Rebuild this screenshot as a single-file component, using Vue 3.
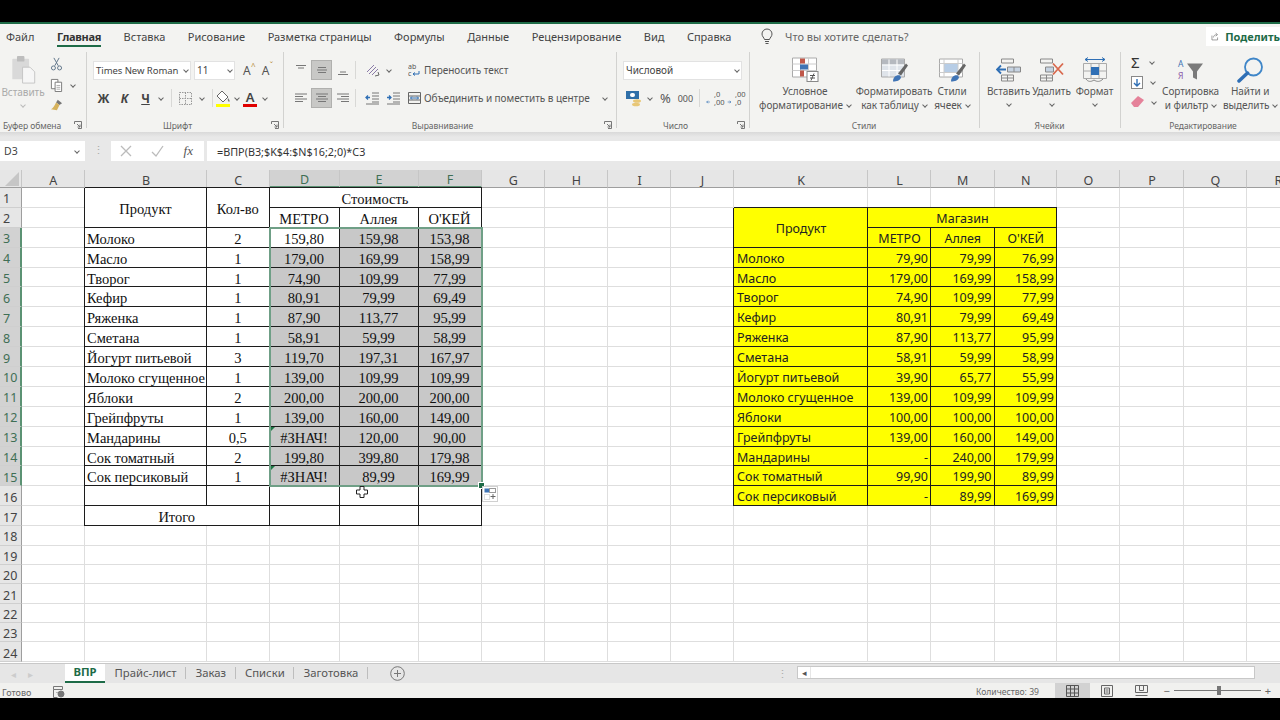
<template>
  <div class="app">
    <div class="accent"></div>

    <div class="menu-row">
      <div class="menu">
        <span v-for="t in menuTabs" :key="t" class="menu-tab" :class="{ active: t === 'Главная' }">{{ t }}</span>
      </div>
      <svg class="bulb" width="14" height="17" viewBox="0 0 14 17" fill="none" stroke="#555" stroke-width="1">
        <path d="M4.5 11.5C4 9.5 2 8.500 2 6a5 5 0 0 1 10 0c0 2.500-2 3.500-2.500 5.500z" />
        <path d="M5 13.500h4M5.500 15.500h3" />
      </svg>
      <span class="tell">Что вы хотите сделать?</span>
      <div class="share">
        <svg width="13" height="13" viewBox="0 0 13 13" fill="none" stroke="#666" stroke-width="1">
          <path d="M1.500 5v7h9V8M4 8c0-3 2.500-4.500 5-4.500M7.500 1l3 2.500-3 2.500" />
        </svg>
        <b>Поделить</b>
      </div>
    </div>

    <div class="ribbon">
      <section class="group g-clip">
        <div class="body clip-body">
          <div class="paste">
            <svg width="25" height="28" viewBox="0 0 26 30">
              <rect x="1" y="3" width="18" height="22" rx="1" fill="#d9d9d9" />
              <rect x="6" y="0" width="8" height="6" rx="1" fill="#bdbdbd" />
              <path d="M12 12h8l5 5v12H12z" fill="#f6f6f6" stroke="#c4c4c4" />
            </svg>
            <span class="dim">Вставить</span>
            <i class="caret dim-caret"></i>
          </div>
          <div class="clip-tools">
            <svg width="13" height="14" viewBox="0 0 14 16" fill="none" stroke="#5f7488" stroke-width="1.100">
              <path d="M4 1l5 9M10 1L5 10" />
              <circle cx="3.500" cy="12.500" r="2.300" />
              <circle cx="10.500" cy="12.500" r="2.300" />
            </svg>
            <div class="tool-line">
              <svg width="13" height="14" viewBox="0 0 14 15" fill="#fff" stroke="#777">
                <path d="M1.500 1.500h7v10h-7z" />
                <path d="M5.500 4.500h7v10h-7z" />
                <path d="M7 8h4M7 10h4M7 12h4" stroke="#aaa" />
              </svg>
              <i class="caret"></i>
            </div>
            <svg width="13" height="12" viewBox="0 0 15 14">
              <path d="M9 1l5 4-3 2-4-3z" fill="#777" />
              <path d="M7 4l4 3-3 6-7-1c2-1 4-4 6-8z" fill="#d6b25c" />
            </svg>
          </div>
        </div>
        <div class="label">
          <span>Буфер обмена</span>
          <svg class="launch" width="8" height="8" viewBox="0 0 8 8" fill="none" stroke="#777"><path d="M.5 3V.5h7v7H4M3 3l3 3M6 3.500V6H3.500" /></svg>
        </div>
      </section>

      <section class="group g-font">
        <div class="body stack">
          <div class="row">
            <div class="field font-name">Times New Roman<i class="caret small"></i></div>
            <div class="field font-size">11<i class="caret small"></i></div>
            <span class="grow-a">A<sup>^</sup></span>
            <span class="grow-a second">A<sup>ˇ</sup></span>
          </div>
          <div class="row font-row">
            <b class="fmt">Ж</b>
            <b class="fmt ital">К</b>
            <b class="fmt under">Ч</b>
            <i class="caret after-u"></i>
            <span class="vsep"></span>
            <svg class="borders" width="13" height="13" viewBox="0 0 13 13" fill="none" stroke="#999">
              <path d="M.5.500h12v12H.500zM6.500.500v12M.500 6.500h12" stroke-dasharray="1.500 1" />
            </svg>
            <i class="caret"></i>
            <span class="vsep"></span>
            <svg class="fill" width="16" height="17" viewBox="0 0 16 17">
              <path d="M7 1l6 6-5 5-6-6z" fill="#fff" stroke="#666" />
              <path d="M13 8c1 1.500 2 2.500 1.500 3.500S12 11 13 8z" fill="#777" />
              <rect x="1" y="14" width="14" height="3" fill="#ffff00" />
            </svg>
            <i class="caret"></i>
            <span class="font-a">A</span>
            <i class="caret"></i>
          </div>
        </div>
        <div class="label">
          <span class="center">Шрифт</span>
          <svg class="launch" width="8" height="8" viewBox="0 0 8 8" fill="none" stroke="#777"><path d="M.5 3V.5h7v7H4M3 3l3 3M6 3.500V6H3.500" /></svg>
        </div>
      </section>

      <section class="group g-align">
        <div class="body align-body">
          <div class="stack align-icons">
            <div class="row">
              <span v-for="(a, i) in vAlign" :key="i" class="ico-btn" :class="{ on: i === 1 }">
                <svg width="14" height="14" viewBox="0 0 14 14" fill="none" stroke="#777"><path :d="a" /></svg>
              </span>
              <span class="vsep tall"></span>
              <svg class="orient" width="16" height="14" viewBox="0 0 16 14" fill="none" stroke="#666">
                <path d="M2 9l7-7M4 11l7-7M7 12l6-6" stroke="#8a7aa8" />
                <path d="M10 13l4-1-1-3" />
              </svg>
              <i class="caret"></i>
            </div>
            <div class="row">
              <span v-for="(a, i) in hAlign" :key="i" class="ico-btn" :class="{ on: i === 1 }">
                <svg width="14" height="14" viewBox="0 0 14 14" fill="none" stroke="#777"><path :d="a" /></svg>
              </span>
              <span class="vsep tall"></span>
              <svg class="indent-a" width="14" height="14" viewBox="0 0 14 14" fill="none" stroke="#777">
                <path d="M7 2h7M7 5h7M7 8h7M7 11h7M1 13h13" />
                <path d="M5 6.500H1M3 4.500l-2 2 2 2" stroke="#2f6fb5" stroke-width="1.300" />
              </svg>
              <svg class="indent-b" width="14" height="14" viewBox="0 0 14 14" fill="none" stroke="#777">
                <path d="M7 2h7M7 5h7M7 8h7M7 11h7M1 13h13" />
                <path d="M1 6.500h4M3 4.500l2 2-2 2" stroke="#2f6fb5" stroke-width="1.300" />
              </svg>
            </div>
          </div>
          <div class="stack align-text">
            <div class="row text-btn">
              <svg width="13" height="14" viewBox="0 0 13 14">
                <text x="0" y="6" font-size="7" font-family="Noto Sans" fill="#555">ab</text>
                <text x="0" y="13" font-size="7" font-family="Noto Sans" fill="#555">c</text>
                <path d="M5 11h6V8M7 9.500L5 11l2 1.500" fill="none" stroke="#2f6fb5" />
              </svg>
              <span>Переносить текст</span>
            </div>
            <div class="row text-btn">
              <svg width="13" height="14" viewBox="0 0 13 14" fill="none" stroke="#666">
                <path d="M.5 1.500h12v11H.500zM.500 5h12M.500 9h12" />
                <path d="M2.500 7h8M4 5.500L2.500 7 4 8.500M9 5.500L10.500 7 9 8.500" stroke="#2f6fb5" />
              </svg>
              <span>Объединить и поместить в центре</span>
              <i class="caret merge-caret"></i>
            </div>
          </div>
        </div>
        <div class="label">
          <span class="center">Выравнивание</span>
          <svg class="launch" width="8" height="8" viewBox="0 0 8 8" fill="none" stroke="#777"><path d="M.5 3V.5h7v7H4M3 3l3 3M6 3.500V6H3.500" /></svg>
        </div>
      </section>

      <section class="group g-num">
        <div class="body stack">
          <div class="row">
            <div class="field num-format">Числовой<i class="caret small"></i></div>
          </div>
          <div class="row num-row">
            <svg width="17" height="17" viewBox="0 0 17 17">
              <rect x="0" y="1" width="13" height="8" fill="#2f6fa8" />
              <rect x="4" y="3" width="5" height="4" rx="2" fill="#fff" />
              <ellipse cx="11" cy="11" rx="4" ry="1.800" fill="#e8c777" />
              <ellipse cx="10" cy="14.500" rx="4" ry="1.800" fill="#e8c777" />
            </svg>
            <i class="caret"></i>
            <span class="pct">%</span>
            <span class="thou">000</span>
            <span class="vsep"></span>
            <span class="dec">
              <svg width="14" height="8" viewBox="0 0 14 8" fill="none" stroke="#2f6fb5"><path d="M6 4H1M3 2L1 4l2 2" /></svg>
              <em>,0<br />,00</em>
            </span>
            <span class="dec">
              <svg width="14" height="8" viewBox="0 0 14 8" fill="none" stroke="#2f6fb5"><path d="M1 4h5M4 2l2 2-2 2" /></svg>
              <em>,00<br />,0</em>
            </span>
          </div>
        </div>
        <div class="label">
          <span class="center">Число</span>
          <svg class="launch" width="8" height="8" viewBox="0 0 8 8" fill="none" stroke="#777"><path d="M.5 3V.5h7v7H4M3 3l3 3M6 3.500V6H3.500" /></svg>
        </div>
      </section>

      <section class="group g-styles">
        <div class="body big-row">
          <div class="big cond">
            <svg width="27" height="25" viewBox="0 0 27 25">
              <path d="M.5.500h24v19H.500z" fill="#fff" stroke="#aaa" />
              <path d="M8.500.500v19M16.500.500v19M.500 6.500h24M.500 13h24" stroke="#ccc" fill="none" />
              <rect x="8" y="1" width="5" height="5" fill="#c0584a" />
              <rect x="8" y="7" width="8" height="5" fill="#3f74b5" />
              <rect x="8" y="13" width="4" height="6" fill="#c0584a" />
              <rect x="15" y="14" width="11" height="10" fill="#fff" stroke="#888" />
              <path d="M18 18h5M18 20.500h5M19 23l3-7" stroke="#555" fill="none" />
            </svg>
            <span>Условное</span>
            <span>форматирование<i class="caret inl"></i></span>
          </div>
          <div class="big table-fmt">
            <svg width="27" height="25" viewBox="0 0 27 25">
              <path d="M.5 1.500h23v18H.500z" fill="#dfe4ea" stroke="#aaa" />
              <rect x="1" y="2" width="22" height="5" fill="#b5b9bf" />
              <path d="M8 2v17M16 2v17M1 7.500h22M1 13h22" stroke="#fff" />
              <path d="M17 16l8-10 2 2-7 10z" fill="#666" />
              <path d="M12 24c0-4 3-7 7-6l1 2c-1 3-4 4-8 4z" fill="#3f74b5" />
            </svg>
            <span>Форматировать</span>
            <span>как таблицу<i class="caret inl"></i></span>
          </div>
          <div class="big cell-fmt">
            <svg width="27" height="25" viewBox="0 0 27 25">
              <path d="M.5 1.500h23v18H.500z" fill="#fff" stroke="#aaa" />
              <rect x="5" y="6" width="14" height="9" fill="#b7cde6" />
              <path d="M5 1.500v18M19 1.500v18M.500 6h23M.500 15h23" stroke="#ccc" fill="none" />
              <path d="M17 16l8-10 2 2-7 10z" fill="#666" />
              <path d="M12 24c0-4 3-7 7-6l1 2c-1 3-4 4-8 4z" fill="#3f74b5" />
            </svg>
            <span>Стили</span>
            <span>ячеек<i class="caret inl"></i></span>
          </div>
        </div>
        <div class="label"><span class="center">Стили</span></div>
      </section>

      <section class="group g-cells">
        <div class="body big-row">
          <div class="big cell-btn">
            <svg width="26" height="25" viewBox="0 0 26 25" fill="none" stroke="#888">
              <path d="M5.500 1.500h12v4h-12zM5.500 17.500h12v6h-12zM11.500 17.500v6M5.500 20.500h12" />
              <path d="M11.500 9.500h13v5h-13zM18 9.500v5" fill="#c6d3e2" />
              <path d="M10 12H1M5 8l-4 4 4 4" stroke="#2f6fb5" stroke-width="1.800" />
            </svg>
            <span>Вставить</span>
            <i class="caret"></i>
          </div>
          <div class="big cell-btn">
            <svg width="26" height="25" viewBox="0 0 26 25" fill="none" stroke="#888">
              <path d="M1.500 1.500h12v4h-12zM1.500 17.500h12v6h-12zM7.500 17.500v6M1.500 20.500h12" />
              <path d="M6.500 9.500h8v5h-8z" fill="#c6d3e2" />
              <path d="M14 6l10 11M24 6L14 17" stroke="#d9694e" stroke-width="1.800" />
            </svg>
            <span>Удалить</span>
            <i class="caret"></i>
          </div>
          <div class="big cell-btn">
            <svg width="26" height="26" viewBox="0 0 26 26" fill="none" stroke="#888">
              <path d="M1.500 6.500h23v15h-23zM9 6.500v15M17 6.500v15M1.500 14h23" stroke="#aaa" />
              <rect x="9" y="10" width="8" height="8" fill="#2f6fb5" stroke="none" />
              <path d="M3 2.500h20M6 .500L3 2.500l3 2M20 .500l3 2-3 2" stroke="#2f6fb5" />
              <path d="M4 22c2 3 5 3 8 1 3 2 6 2 9-1" />
            </svg>
            <span>Формат</span>
            <i class="caret"></i>
          </div>
        </div>
        <div class="label"><span class="center">Ячейки</span></div>
      </section>

      <section class="group g-edit">
        <div class="body edit-body">
          <div class="edit-tools">
            <div class="tool-line"><span class="sigma">Σ</span><i class="caret"></i></div>
            <div class="tool-line">
              <svg width="12" height="13" viewBox="0 0 12 13">
                <rect x=".5" y=".5" width="11" height="12" fill="#fff" stroke="#888" />
                <path d="M6 3v7M3 7l3 3 3-3" fill="none" stroke="#2f6fb5" stroke-width="1.400" />
              </svg>
              <i class="caret"></i>
            </div>
            <div class="tool-line">
              <svg width="13" height="12" viewBox="0 0 13 12"><path d="M0 7l7-7 6 4-6 7H3z" fill="#e5829a" /></svg>
              <i class="caret"></i>
            </div>
          </div>
          <div class="big sort">
            <svg width="27" height="25" viewBox="0 0 27 25">
              <text x="1" y="9" font-size="8.500" font-family="Noto Sans" fill="#3f74b5">А</text>
              <text x="1" y="21" font-size="8.500" font-family="Noto Sans" fill="#8a5aa8">Я</text>
              <path d="M10 6h16l-6 8v8l-4-2v-6z" fill="#7a7a7a" />
            </svg>
            <span>Сортировка</span>
            <span>и фильтр<i class="caret inl"></i></span>
          </div>
          <div class="big find">
            <svg width="27" height="26" viewBox="0 0 27 26" fill="none">
              <circle cx="16.500" cy="10" r="8.500" stroke="#3f86c8" stroke-width="1.800" />
              <path d="M10.500 16L2 24" stroke="#2f6fb5" stroke-width="3.500" stroke-linecap="round" />
            </svg>
            <span>Найти и</span>
            <span>выделить<i class="caret inl"></i></span>
          </div>
        </div>
        <div class="label"><span class="center">Редактирование</span></div>
      </section>
    </div>

    <div class="formula-bar">
      <div class="name-box">D3<i class="caret small"></i></div>
      <span class="dots">⋮</span>
      <div class="fx-buttons">
        <svg width="12" height="12" viewBox="0 0 12 12" fill="none" stroke="#bbb" stroke-width="1.300"><path d="M1 1l10 10M11 1L1 11" /></svg>
        <svg width="13" height="12" viewBox="0 0 13 12" fill="none" stroke="#bbb" stroke-width="1.300"><path d="M1 7l4 4 7-10" /></svg>
        <span class="fx">fx</span>
      </div>
      <div class="formula">=ВПР(B3;$K$4:$N$16;2;0)*C3</div>
    </div>

    <div class="sheet">
      <div class="corner"><svg width="14" height="14" viewBox="0 0 14 14"><path d="M14 0v14H0z" fill="#c6c6c6" /></svg></div>
      <div
        v-for="(l, i) in letters"
        :key="l"
        class="col-head"
        :class="{ sel: i >= 3 && i <= 5 }"
      >{{ l }}</div>
      <template v-for="n in 24" :key="n">
        <div
          class="row-head"
          :class="{ sel: n >= 3 && n <= 15 }"
          :style="{ gridArea: `${n + 1} / 1` }"
        >{{ n }}</div>
      </template>
      <div
        v-for="c in cells"
        :key="c.key"
        class="cell"
        :class="c.cls"
        :style="{ gridArea: c.area }"
      >{{ c.text }}</div>
      <div class="selection">
        <span class="handle"></span>
        <span class="paste-opt">
          <svg width="12" height="12" viewBox="0 0 12 12">
            <rect x=".5" y=".5" width="5" height="4" fill="#3f74b5" />
            <rect x="5.500" y=".5" width="6" height="4" fill="#fff" stroke="#999" />
            <path d="M.5 6.500h5v5h-5z" fill="none" stroke="#bbb" stroke-dasharray="1 1" />
            <path d="M9 6v5M6.500 8.500h5" stroke="#666" />
          </svg>
        </span>
      </div>
      <svg class="cursor" width="12" height="12" viewBox="0 0 12 12">
        <path d="M4 .5h4V4h3.500v4H8v3.500H4V8H.5V4H4z" fill="#fff" stroke="#222" />
      </svg>
    </div>

    <div class="tabbar">
      <div class="tab-nav"><span>◂</span><span>▸</span></div>
      <div class="tab active">ВПР</div>
      <div v-for="t in sheets" :key="t" class="tab">{{ t }}</div>
      <svg class="add" width="15" height="15" viewBox="0 0 15 15" fill="none" stroke="#777">
        <circle cx="7.500" cy="7.500" r="6.800" />
        <path d="M7.500 4v7M4 7.500h7" />
      </svg>
      <span class="split">⋮</span>
      <div class="hscroll">
        <span class="arrow">◂</span>
        <span class="thumb"></span>
      </div>
    </div>

    <div class="statusbar">
      <span class="ready">Готово</span>
      <svg class="macro" width="12" height="12" viewBox="0 0 12 12" fill="none" stroke="#777">
        <path d="M.5.500h9v3h-9zM.5 3.500v8h4M3.500 6.500h1" />
        <circle cx="8" cy="8" r="3" fill="#777" />
      </svg>
      <span class="count">Количество: 39</span>
      <div class="views">
        <span class="view on">
          <svg width="13" height="12" viewBox="0 0 13 12" fill="none" stroke="#555"><path d="M.5.500h12v11H.500zM4.500.500v11M8.500.500v11M.500 4h12M.500 8h12" /></svg>
        </span>
        <span class="view">
          <svg width="12" height="12" viewBox="0 0 12 12" fill="none" stroke="#666"><path d="M.5.500h11v11H.500zM3.500 3h5v6h-5zM4.500 5h3M4.500 7h3" /></svg>
        </span>
        <span class="view">
          <svg width="13" height="12" viewBox="0 0 13 12" fill="none" stroke="#666"><path d="M.5 7.500V.500h12v7M.5 7.500h12M4.500.500v5h4v-5M.5 10.500h12" /></svg>
        </span>
      </div>
      <div class="zoom">
        <span>−</span>
        <div class="track"><i></i></div>
        <span>+</span>
      </div>
    </div>
  </div>
</template>

<script setup>
const menuTabs = ['Файл', 'Главная', 'Вставка', 'Рисование', 'Разметка страницы', 'Формулы', 'Данные', 'Рецензирование', 'Вид', 'Справка']
const sheets = ['Прайс-лист', 'Заказ', 'Списки', 'Заготовка']
const letters = 'ABCDEFGHIJKLMNOPQR'.split('')

const vAlign = ['M2 2.500h10M4 5h6', 'M3 4.500h8M2 7h10M3 9.500h8', 'M4 9h6M2 11.500h10']
const hAlign = ['M1 3h12M1 5.500h8M1 8h12M1 10.500h8', 'M1 3h12M3 5.500h8M1 8h12M3 10.500h8', 'M1 3h12M5 5.500h8M1 8h12M5 10.500h8']

const orders = [
  ['Молоко', '2', '159,80', '159,98', '153,98'],
  ['Масло', '1', '179,00', '169,99', '158,99'],
  ['Творог', '1', '74,90', '109,99', '77,99'],
  ['Кефир', '1', '80,91', '79,99', '69,49'],
  ['Ряженка', '1', '87,90', '113,77', '95,99'],
  ['Сметана', '1', '58,91', '59,99', '58,99'],
  ['Йогурт питьевой', '3', '119,70', '197,31', '167,97'],
  ['Молоко сгущенное', '1', '139,00', '109,99', '109,99'],
  ['Яблоки', '2', '200,00', '200,00', '200,00'],
  ['Грейпфруты', '1', '139,00', '160,00', '149,00'],
  ['Мандарины', '0,5', '#ЗНАЧ!', '120,00', '90,00'],
  ['Сок томатный', '2', '199,80', '399,80', '179,98'],
  ['Сок персиковый', '1', '#ЗНАЧ!', '89,99', '169,99'],
]

const prices = [
  ['Молоко', '79,90', '79,99', '76,99'],
  ['Масло', '179,00', '169,99', '158,99'],
  ['Творог', '74,90', '109,99', '77,99'],
  ['Кефир', '80,91', '79,99', '69,49'],
  ['Ряженка', '87,90', '113,77', '95,99'],
  ['Сметана', '58,91', '59,99', '58,99'],
  ['Йогурт питьевой', '39,90', '65,77', '55,99'],
  ['Молоко сгущенное', '139,00', '109,99', '109,99'],
  ['Яблоки', '100,00', '100,00', '100,00'],
  ['Грейпфруты', '139,00', '160,00', '149,00'],
  ['Мандарины', '-', '240,00', '179,99'],
  ['Сок томатный', '99,90', '199,90', '89,99'],
  ['Сок персиковый', '-', '89,99', '169,99'],
]

// col is 1-based from A, row is the sheet row number
const cells = []
const taken = new Set()
const put = (col, row, text, cls = '', colSpan = 1, rowSpan = 1) => {
  for (let c = col; c < col + colSpan; c++) {
    for (let r = row; r < row + rowSpan; r++) taken.add(c + ':' + r)
  }
  cells.push({
    key: col + ':' + row,
    text,
    cls,
    area: `${row + 1} / ${col + 1} / span ${rowSpan} / span ${colSpan}`,
  })
}

put(2, 1, 'Продукт', 'dark mid', 1, 2)
put(3, 1, 'Кол-во', 'dark mid', 1, 2)
put(4, 1, 'Стоимость', 'dark mid', 3, 1)
put(4, 2, 'МЕТРО', 'dark mid')
put(5, 2, 'Аллея', 'dark mid')
put(6, 2, "О'КЕЙ", 'dark mid')

orders.forEach((o, i) => {
  const row = i + 3
  put(2, row, o[0], 'dark')
  put(3, row, o[1], 'dark mid')
  o.slice(2).forEach((v, j) => {
    const active = row === 3 && j === 0
    const err = v === '#ЗНАЧ!' ? ' err' : ''
    put(4 + j, row, v, 'dark mid' + (active ? '' : ' shade') + err)
  })
})

for (let c = 2; c <= 6; c++) put(c, 16, '', 'dark')
put(2, 17, 'Итого', 'dark mid', 2, 1)
put(4, 17, '', 'dark')
put(5, 17, '', 'dark')
put(6, 17, '', 'dark')

put(11, 2, 'Продукт', 'dark yellow mid cal', 1, 2)
put(12, 2, 'Магазин', 'dark yellow mid cal', 3, 1)
put(12, 3, 'МЕТРО', 'dark yellow mid cal')
put(13, 3, 'Аллея', 'dark yellow mid cal')
put(14, 3, "О'КЕЙ", 'dark yellow mid cal')

prices.forEach((p, i) => {
  const row = i + 4
  put(11, row, p[0], 'dark yellow cal')
  p.slice(1).forEach((v, j) => put(12 + j, row, v, 'dark yellow cal num'))
})

for (let c = 1; c <= 18; c++) {
  for (let r = 1; r <= 24; r++) {
    if (!taken.has(c + ':' + r)) put(c, r, '', '')
  }
}
</script>

<style>
html, body {
  margin: 0;
  background: #000;
}
</style>

<style scoped>
.app {
  width: 1280px;
  height: 698px;
  padding-top: 22px;
  box-sizing: content-box;
  background: #000;
  display: flex;
  flex-direction: column;
  overflow: hidden;
  font-family: "Noto Sans", "Open Sans", sans-serif;
  color: #444;
}

.accent {
  height: 2px;
  background: #1e6b47;
  flex: none;
}

.menu-row {
  height: 28px;
  flex: none;
  box-sizing: border-box;
  padding-bottom: 3px;
  background: #f3f3f1;
  display: flex;
  align-items: center;
  font-size: 11px;
}

.menu {
  display: flex;
  gap: 22.500px;
  padding-left: 6px;
  width: 758px;
  height: 100%;
  align-items: center;
  box-sizing: border-box;
}

.menu-tab {
  position: relative;
  white-space: nowrap;
}

.menu-tab.active {
  font-weight: 700;
  letter-spacing: -0.3px;
  color: #333;
}

.menu-tab.active::after {
  content: "";
  position: absolute;
  left: 0;
  right: 0;
  bottom: -3px;
  height: 2px;
  background: #1e6b47;
}

.bulb {
  margin-left: 2px;
}

.tell {
  margin-left: 11px;
  color: #666;
  width: 421px;
}

.share {
  flex: 1;
  height: 19px;
  background: #fff;
  display: flex;
  align-items: center;
  gap: 6px;
  padding-left: 5px;
  white-space: nowrap;
  overflow: hidden;
  color: #1e6b47;
}

.ribbon {
  height: 80px;
  flex: none;
  display: flex;
  background: #f3f3f1;
  font-size: 10px;
  letter-spacing: -0.05px;
  color: #555;
}

.group {
  flex: none;
  height: 76px;
  box-sizing: border-box;
  border-right: 1px solid #d2d2d0;
  display: flex;
  flex-direction: column;
}

.g-clip { width: 87px; }
.g-font { width: 197px; }
.g-align { width: 333px; }
.g-num { width: 133px; }
.g-styles { width: 230px; }
.g-cells { width: 141px; }
.g-edit { width: 159px; border-right: none; }

.body {
  height: 66px;
  flex: none;
}

.label {
  flex: none;
  height: 14px;
  font-size: 8.500px;
  color: #666;
  display: flex;
  align-items: center;
  padding: 0 4px 0 3px;
  justify-content: space-between;
}

.g-edit .label {
  padding-left: 9px;
}

.center {
  flex: 1;
  text-align: center;
}

.launch {
  flex: none;
}

.center + .launch {
  margin-left: 6px;
}

.caret {
  display: inline-block;
  width: 3px;
  height: 3px;
  border-right: 1px solid #666;
  border-bottom: 1px solid #666;
  transform: rotate(45deg);
  flex: none;
}

.caret.small {
  margin-left: auto;
  margin-right: 2px;
}

.caret.inl {
  margin-left: 4px;
  vertical-align: 2px;
}

.stack {
  display: flex;
  flex-direction: column;
  gap: 8px;
  padding-top: 8px;
  box-sizing: border-box;
}

.row {
  display: flex;
  align-items: center;
  height: 20px;
}

.field {
  height: 19px;
  background: #fff;
  border: 1px solid #e2e2e2;
  box-sizing: border-box;
  display: flex;
  align-items: center;
  padding-left: 2px;
  white-space: nowrap;
  color: #444;
}

/* clipboard */
.clip-body {
  display: flex;
}

.paste {
  width: 46px;
  display: flex;
  flex-direction: column;
  align-items: center;
  padding-top: 4px;
  box-sizing: border-box;
}

.paste svg {
  margin-bottom: 1px;
}

.dim {
  color: #aaa;
}

.dim-caret {
  border-color: #bbb;
  margin-top: 4px;
}

.clip-tools {
  display: flex;
  flex-direction: column;
  gap: 7px;
  padding: 5px 0 0 4px;
}

.tool-line {
  display: flex;
  align-items: center;
  gap: 8px;
}

/* font */
.g-font .body {
  padding-left: 6px;
}

.font-name {
  width: 98px;
  font-size: 9.500px;
}

.font-size {
  width: 41px;
  margin-left: 3px;
}

.grow-a {
  margin-left: 8px;
  font-size: 12px;
  color: #555;
  position: relative;
}

.grow-a sup {
  font-size: 8px;
  color: #b58a3a;
  position: absolute;
  top: -2px;
  left: 8px;
}

.grow-a.second {
  margin-left: 11px;
}

.fmt {
  width: 21px;
  text-align: center;
  font-size: 12px;
  color: #444;
}

.ital {
  font-style: italic;
}

.under {
  text-decoration: underline;
}

.after-u {
  margin-left: 3px;
}

.vsep {
  width: 1px;
  height: 18px;
  background: #d8d8d6;
  margin: 0 5px 0 8px;
  flex: none;
}

.borders {
  margin-right: 8px;
  margin-left: 2px;
}

.fill {
  margin-left: -3px;
  margin-right: 4px;
}

.font-a {
  margin-left: 4px;
  margin-right: 6px;
  width: 14px;
  text-align: center;
  font-size: 13px;
  font-weight: 600;
  line-height: 14px;
  color: #444;
  border-bottom: 3px solid #e00000;
}

/* alignment */
.align-body {
  display: flex;
}

.align-icons {
  width: 124px;
  padding-left: 6px;
}

.ico-btn {
  width: 21px;
  height: 20px;
  display: flex;
  align-items: center;
  justify-content: center;
  flex: none;
}

.ico-btn.on {
  background: #c8c8c6;
  box-shadow: inset 0 0 0 1px #b0b0ae;
}

.vsep.tall {
  margin: 0 9px 0 2px;
}

.orient {
  margin-right: 6px;
}

.indent-b {
  margin-left: 7px;
}

.align-text {
  flex: 1;
}

.text-btn {
  gap: 3px;
  white-space: nowrap;
  color: #555;
}

.merge-caret {
  margin-left: 10px;
}

/* number */
.g-num .body {
  padding-left: 6px;
}

.num-format {
  width: 119px;
}

.num-row {
  padding-left: 3px;
}

.num-row .caret {
  margin-left: 5px;
}

.pct {
  font-size: 13px;
  margin-left: 8px;
}

.thou {
  font-size: 9px;
  margin-left: 7px;
}

.num-row .vsep {
  margin: 0 6px 0 6px;
}

.dec {
  width: 21px;
  flex: none;
  position: relative;
  height: 16px;
  font-size: 7.500px;
  line-height: 8px;
}

.dec svg {
  position: absolute;
  left: 0;
  top: 8px;
  width: 9px;
}

.dec em {
  font-style: normal;
  position: absolute;
  left: 8px;
  top: 0;
}

/* big buttons */
.big-row,
.edit-body {
  display: flex;
}

.big {
  display: flex;
  flex-direction: column;
  align-items: center;
  line-height: 14px;
  white-space: nowrap;
  padding-top: 5px;
  box-sizing: border-box;
}

.big svg {
  height: 26px;
  margin-bottom: 1px;
  flex: none;
}

.cond { width: 104px; margin-left: 3px; }
.table-fmt { width: 76px; margin-left: -1px; }
.cell-fmt { width: 32px; margin-left: 4px; }

.cell-btn {
  width: 43px;
  flex: none;
}

.g-cells .big-row {
  padding-left: 7px;
}

.cell-btn .caret {
  margin-top: 4px;
}

.edit-tools {
  width: 44px;
  padding-left: 10px;
  box-sizing: border-box;
}

.edit-tools .tool-line {
  height: 20px;
}

.sigma {
  font-size: 15px;
  line-height: 16px;
  color: #333;
  margin-right: 2px;
}

.sort { width: 60px; margin-left: -4px; }
.find { width: 60px; }

/* formula bar */
.formula-bar {
  height: 38px;
  flex: none;
  box-sizing: border-box;
  padding: 9px 0;
  background: linear-gradient(#d9d9d9, #e8e8e8 5px);
  display: flex;
  align-items: stretch;
  font-size: 10.500px;
  color: #444;
}

.name-box {
  width: 85px;
  background: #fff;
  display: flex;
  align-items: center;
  padding-left: 4px;
  box-sizing: border-box;
}

.name-box .caret {
  margin-right: 6px;
}

.dots {
  width: 26px;
  text-align: center;
  color: #aaa;
  line-height: 19px;
}

.fx-buttons {
  width: 93px;
  background: #fff;
  display: flex;
  align-items: center;
  justify-content: space-between;
  padding: 0 11px 0 9px;
  box-sizing: border-box;
}

.fx {
  font-family: "Liberation Serif", serif;
  font-style: italic;
  font-size: 13px;
  color: #555;
}

.formula {
  flex: 1;
  margin-left: 3px;
  background: #fff;
  padding-left: 10px;
  display: flex;
  align-items: center;
  font-size: 10.800px;
  color: #333;
}

/* sheet */
.sheet {
  height: 493px;
  flex: none;
  background: #fff;
  position: relative;
  overflow: hidden;
  display: grid;
  grid-template-columns: 21.500px 63.500px 122px 62.500px 70px 79px 63px 63.500px 63px 63px 63px 134px 63px 63.500px 62.500px 63px 64px 63px 63px;
  grid-template-rows: 18px repeat(17, 19.900px) repeat(7, 19.400px);
  font-family: "Liberation Serif", serif;
  font-size: 14.500px;
  color: #111;
}

.corner {
  background: #e6e6e6;
  border-right: 1px solid #c6c6c6;
  border-bottom: 1px solid #9e9e9e;
  display: flex;
  align-items: flex-end;
  justify-content: flex-end;
  padding: 0 2px 1px 0;
  box-sizing: border-box;
}

.col-head,
.row-head {
  font-family: "Noto Sans", sans-serif;
  font-size: 12.500px;
  color: #444;
  background: #e6e6e6;
  box-sizing: border-box;
  display: flex;
  align-items: center;
  justify-content: center;
  padding-top: 3px;
}

.col-head {
  padding-left: 1px;
  border-right: 1px solid #c6c6c6;
  border-bottom: 1px solid #9e9e9e;
}

.row-head {
  border-right: 1px solid #9e9e9e;
  border-bottom: 1px solid #cfcfcf;
  justify-content: flex-start;
  padding-left: 3px;
}

.col-head.sel {
  background: #d2d2d2;
  color: #3f6f55;
  border-bottom: 2px solid #5b9273;
}

.row-head.sel {
  background: #d2d2d2;
  color: #3f6f55;
  border-right: 2px solid #5b9273;
}

.cell {
  box-sizing: border-box;
  border-right: 1px solid #dedede;
  border-bottom: 1px solid #dedede;
  display: flex;
  align-items: center;
  padding: 4px 2px 0;
  white-space: nowrap;
  min-width: 0;
  position: relative;
}

.cell.dark {
  border-right: 1px solid #1c1c1c;
  border-bottom: 1px solid #1c1c1c;
  box-shadow: -1px 0 0 #1c1c1c, 0 -1px 0 #1c1c1c;
  z-index: 1;
}

.cell.mid {
  justify-content: center;
}

.cell.shade {
  background: #c8c8c8;
}

.cell.yellow {
  background: #ffff00;
}

.cell.cal {
  font-family: "Noto Sans", sans-serif;
  font-size: 12.500px;
  color: #222;
  padding: 2px 2px 0 3px;
}

.cell.num {
  justify-content: flex-end;
}

.cell.err::before {
  content: "";
  position: absolute;
  left: 0;
  top: 0;
  border-top: 5px solid #1e7a46;
  border-right: 5px solid transparent;
}

.selection {
  grid-area: 4 / 5 / span 13 / span 3;
  border: 2px solid #6f9f86;
  margin: -1px;
  position: relative;
  z-index: 3;
  pointer-events: none;
}

.handle {
  position: absolute;
  right: -4px;
  bottom: -4px;
  width: 5px;
  height: 5px;
  background: #1e6b47;
  border: 1px solid #fff;
}

.paste-opt {
  position: absolute;
  left: calc(100% + 1px);
  top: calc(100% + 1px);
  width: 16px;
  height: 16px;
  background: #fff;
  border: 1px solid #d0d0d0;
  box-sizing: border-box;
  display: flex;
  align-items: center;
  justify-content: center;
}

.cursor {
  position: absolute;
  left: 356px;
  top: 316px;
  z-index: 4;
}

/* sheet tabs */
.tabbar {
  height: 20px;
  flex: none;
  background: #e6e6e6;
  border-top: 1px solid #c8c8c8;
  box-sizing: border-box;
  display: flex;
  align-items: center;
  font-size: 11.300px;
  color: #555;
}

.tab-nav {
  width: 65px;
  display: flex;
  gap: 12px;
  padding-left: 11px;
  box-sizing: border-box;
  color: #ccc;
  font-size: 10px;
}

.tab {
  height: 100%;
  padding: 0 9.500px 3px;
  box-sizing: border-box;
  display: flex;
  align-items: center;
  white-space: nowrap;
  position: relative;
}

.tab + .tab::after {
  content: "";
  position: absolute;
  right: 0;
  top: 3px;
  bottom: 4px;
  width: 1px;
  background: #bdbdbd;
}

.tab.active {
  background: #fff;
  color: #1e6b47;
  font-weight: 700;
  width: 40px;
  padding: 0 0 2px;
  justify-content: center;
  border-bottom: 2px solid #1e6b47;
}

.add {
  margin-left: 22px;
  margin-bottom: 1px;
}

.split {
  margin-left: auto;
  color: #aaa;
  margin-right: 9px;
}

.hscroll {
  width: 458px;
  height: 13px;
  margin: 0 25px 2px 0;
  display: flex;
  gap: 1px;
  align-items: stretch;
  border: 1px solid #c8c8c8;
  box-sizing: border-box;
}

.arrow {
  width: 12px;
  background: #fff;
  font-size: 9px;
  line-height: 11px;
  text-align: center;
  color: #555;
  flex: none;
}

.thumb {
  flex: 1;
  background: #fff;
}

/* status */
.statusbar {
  height: 15px;
  flex: none;
  box-sizing: border-box;
  background: #f1f1ef;
  display: flex;
  align-items: center;
  font-size: 9px;
  color: #666;
  overflow: hidden;
}

.ready {
  margin: 3px 0 0 2px;
}

.macro {
  margin: 3px 0 0 22px;
}

.count {
  margin: 3px 0 0 auto;
  font-size: 8.600px;
}

.views {
  display: flex;
  margin-left: 16px;
  height: 100%;
}

.view {
  width: 34.500px;
  display: flex;
  align-items: center;
  justify-content: center;
}

.view.on {
  background: #d2d2d2;
}

.zoom {
  width: 121.500px;
  box-sizing: border-box;
  padding: 0 9px 0 5px;
  display: flex;
  align-items: center;
  gap: 4px;
  font-size: 11px;
}

.track {
  flex: 1;
  height: 1px;
  background: #777;
  position: relative;
}

.track i {
  position: absolute;
  left: 43px;
  top: -4px;
  width: 4px;
  height: 9px;
  background: #777;
}
</style>
